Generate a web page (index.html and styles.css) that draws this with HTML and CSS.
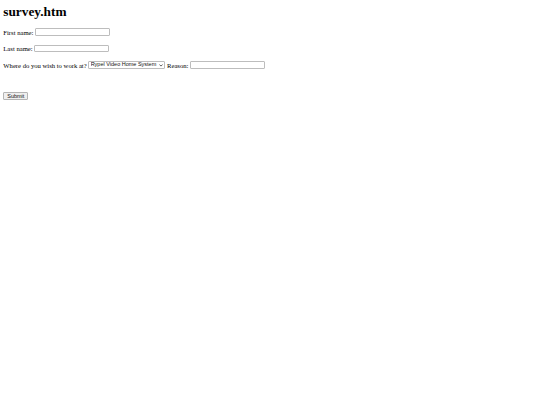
FILE: index.html
```html
<!DOCTYPE html>
<html>
<head>
<meta charset="utf-8">
<title>survey.htm</title>
<link rel="stylesheet" href="styles.css">
</head>
<body>
<h1 class="title">survey.htm</h1>
<form class="survey">
  <div class="row">
    <label class="label" for="first">First name:</label>
    <input class="field" type="text" id="first" name="first">
  </div>
  <div class="row">
    <label class="label" for="last">Last name:</label>
    <input class="field" type="text" id="last" name="last">
  </div>
  <div class="row">
    <label class="label" for="place">Where do you wish to work at?</label>
    <span class="select-wrap">
      <select class="select" id="place" name="place">
        <option>Rypel Video Home System</option>
      </select>
      <svg class="chevron" viewBox="0 0 10 6" aria-hidden="true"><path d="M1 1 L5 5 L9 1" fill="none" stroke="#222" stroke-width="1.8"/></svg>
    </span>
    <label class="label" for="reason">Reason:</label>
    <input class="field" type="text" id="reason" name="reason">
  </div>
  <div class="row submit-row">
    <button class="submit" type="submit">Submit</button>
  </div>
</form>
</body>
</html>
```
FILE: styles.css
```css
html {
  background: #ffffff;
}
body {
  margin: 3.5px 3.3px;
  font-family: "Liberation Serif", "Times New Roman", serif;
  font-size: 6.65px;
  color: #000000;
}
.title {
  margin: 0 0 9px;
  font-size: 13.3px;
  line-height: 15px;
  font-weight: bold;
}
.survey {
  margin: 0;
}
.row {
  display: flex;
  align-items: center;
  gap: 1.7px;
  height: 9px;
  margin-bottom: 7.6px;
}
.label {
  white-space: nowrap;
}
.field {
  box-sizing: border-box;
  width: 75px;
  height: 7.5px;
  margin: 0;
  padding: 0 1px;
  border: 1px solid #bdbdbd;
  border-radius: 1px;
  background: #ffffff;
  font-family: "Liberation Sans", Arial, sans-serif;
  font-size: 5.5px;
}
.select-wrap {
  position: relative;
  display: inline-flex;
}
.select {
  appearance: none;
  -webkit-appearance: none;
  box-sizing: border-box;
  width: 77px;
  height: 7.5px;
  margin: 0;
  padding: 0 0 0 1.3px;
  border: 1px solid #bdbdbd;
  border-radius: 1px;
  background: #ffffff;
  color: #111111;
  font-family: "Liberation Sans", Arial, sans-serif;
  font-size: 5.5px;
  line-height: 5.5px;
}
.chevron {
  position: absolute;
  right: 2.4px;
  top: 2.5px;
  width: 4px;
  height: 2.6px;
  pointer-events: none;
}
.submit-row {
  margin-top: 22px;
}
.submit {
  box-sizing: border-box;
  width: 25px;
  height: 8px;
  margin: 0;
  padding: 0;
  border: 1px solid #b4b4b4;
  border-radius: 1px;
  background: #efefef;
  color: #111111;
  font-family: "Liberation Sans", Arial, sans-serif;
  font-size: 5.5px;
  line-height: 6px;
}
```
